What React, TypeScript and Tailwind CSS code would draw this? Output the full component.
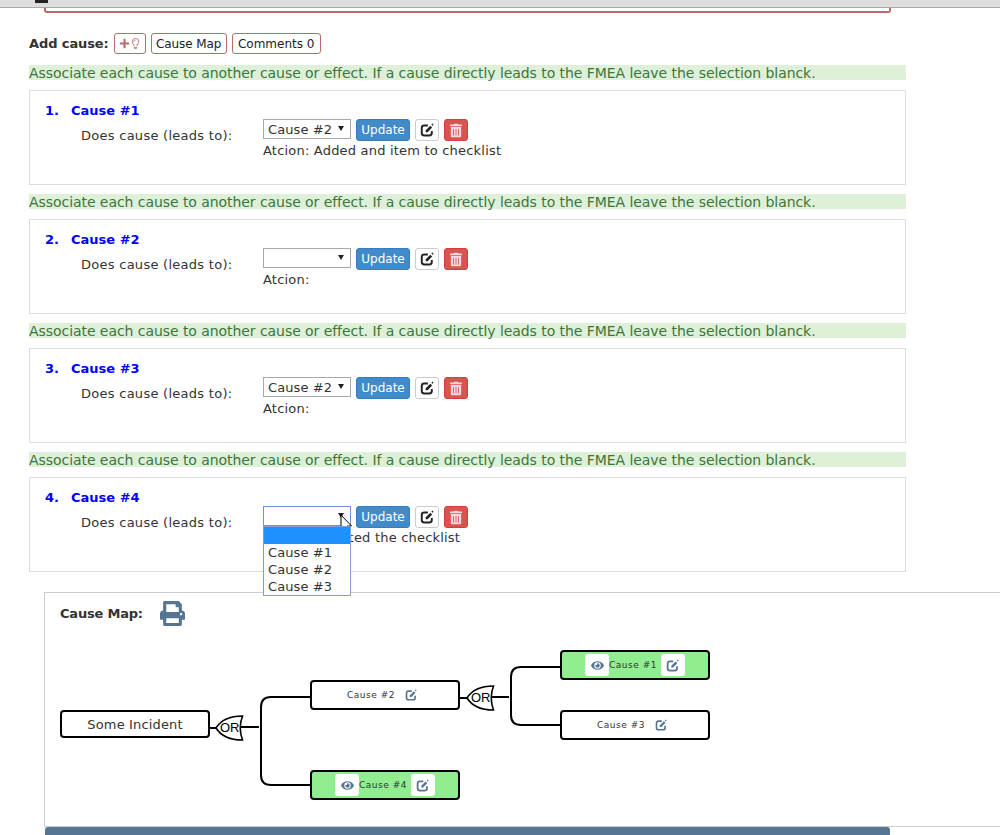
import React from "react";
import { FaPlus, FaRegLightbulb, FaPrint, FaEye, FaTrashAlt } from "react-icons/fa";

const HINT = "Associate each cause to another cause or effect. If a cause directly leads to the FMEA leave the selection blanck.";

function EditIcon({ className, color }: { className?: string; color: string }) {
  return (
    <svg viewBox="0 0 16 16" className={className} fill="none" stroke={color}>
      <path d="M13.5 9v2.5a2.8 2.8 0 0 1-2.8 2.8H4.8A2.8 2.8 0 0 1 2 11.5V5.6a2.8 2.8 0 0 1 2.8-2.8H9" strokeWidth="2.2" />
      <path d="M6.5 10.5V8.2L11.8 3l2.1 2.1L8.7 10.5z" fill={color} stroke="none" />
      <path d="M13 1.8l1.2-1.1 1.3 1.3-1.1 1.2z" fill={color} stroke="none" />
    </svg>
  );
}

function CauseSelect({ value, focus }: { value: string; focus?: boolean }) {
  return (
    <div className="relative w-[88px] h-[20px]">
      <select
        value={value}
        onChange={() => {}}
        className={`appearance-none block w-[88px] h-[20px] bg-white pl-1 pt-[2px] text-[13px] leading-[16px] tracking-[0.1px] text-[#333] border rounded-none ${focus ? "border-[#6d95d8]" : "border-[#a9a9a9]"}`}
      >
        <option value=""></option>
        <option value="Cause #1">Cause #1</option>
        <option value="Cause #2">Cause #2</option>
        <option value="Cause #3">Cause #3</option>
      </select>
      <svg viewBox="0 0 6 5" className="absolute right-[7px] top-[7px] w-[6px] h-[5px]">
        <path d="M0 0h6L3 5z" fill="#222" />
      </svg>
    </div>
  );
}

function CauseCard({ n, select, action, dropdown }: { n: number; select: string; action: string; dropdown?: boolean }) {
  return (
    <div className="relative h-[95px] border border-[#ddd] bg-white flex flex-col pl-[15px] pt-[11px]">
      <div className="flex h-[17px] items-center text-[13px] font-bold text-[#0000ff]">
        <span className="w-[26px]">{n}.</span>
        <span>Cause #{n}</span>
      </div>
      <div className="flex">
        <div className="w-[218px] pl-[36px] pt-[8px] text-[13px] leading-[18px] tracking-[0.27px] text-[#333]">Does cause (leads to):</div>
        <div className="flex flex-col">
          <div className="flex items-start gap-[5px] h-[22px]">
            <CauseSelect value={select} focus={dropdown} />
            <button className="h-[22px] w-[54px] rounded-[3px] bg-[#428bca] border border-[#357ebd] text-white text-[12px] font-normal">Update</button>
            <button className="h-[22px] w-[24px] rounded-[3px] bg-white border border-[#ccc] flex items-center justify-center">
              <EditIcon className="w-[14px] h-[14px]" color="#222" />
            </button>
            <button className="h-[22px] w-[24px] rounded-[3px] bg-[#d9534f] border border-[#d43f3a] flex items-center justify-center">
              <FaTrashAlt className="w-[12px] h-[15px] text-[#f8d7e4]" />
            </button>
          </div>
          <div className="mt-[1px] text-[13px] leading-[18px] tracking-[0.2px] text-[#333]">{action}</div>
        </div>
      </div>
      {dropdown && (
        <div className="absolute left-[233px] top-[48px] w-[88px] h-[70px] bg-white border border-[#7f9fd6] text-[13px] leading-[17px] tracking-[0.1px] text-[#333] z-10">
          <div className="h-[17px] bg-[#1e90ff]" />
          <div className="pl-1">Cause #1</div>
          <div className="pl-1">Cause #2</div>
          <div className="pl-1">Cause #3</div>
        </div>
      )}
    </div>
  );
}

function Section(props: { n: number; select: string; action: string; dropdown?: boolean }) {
  return (
    <div className="flex flex-col gap-[10px]">
      <div className="h-[15px] bg-[#dff0d8] text-[#3c763d] text-[14px] leading-[17px] tracking-[-0.06px] whitespace-nowrap">{HINT}</div>
      <CauseCard {...props} />
    </div>
  );
}

function MapBtn({ children }: { children: React.ReactNode }) {
  return <span className="w-[24px] h-[22px] bg-white rounded-[3px] flex items-center justify-center">{children}</span>;
}

function Node({ x, y, label, green, w = 150, h = 30, big, edit = true, eye }: { x: number; y: number; label: string; green?: boolean; w?: number; h?: number; big?: boolean; edit?: boolean; eye?: boolean }) {
  const plain = !green && !big;
  return (
    <div
      className={`absolute flex items-center justify-center border-2 border-black rounded-[4px] text-[#333] ${green ? "bg-[#90ee90]" : "bg-white"} ${plain ? "pr-[6px]" : ""}`}
      style={{ left: x, top: y, width: w, height: h }}
    >
      {eye && <MapBtn><FaEye className="w-[13px] h-[13px] text-[#567592]" /></MapBtn>}
      <span className={big ? "text-[13px] tracking-[0.15px] mt-[1px]" : "text-[9px] tracking-[0.5px] mt-[1px]"}>{label}</span>
      {edit && (green ? (
        <span className="ml-[4px]"><MapBtn><EditIcon className="w-[13px] h-[13px]" color="#567592" /></MapBtn></span>
      ) : (
        <EditIcon className="ml-[10px] w-[12px] h-[12px]" color="#567592" />
      ))}
    </div>
  );
}

function OrGate({ x, y }: { x: number; y: number }) {
  return (
    <div className="absolute w-[29px] h-[26px]" style={{ left: x, top: y }}>
      <svg viewBox="0 0 29 26" className="absolute inset-0 w-[29px] h-[26px]">
        <path d="M1 13C6 5 14 1 27.5 1Q23 13 27.5 25C14 25 6 21 1 13Z" fill="#fff" stroke="#000" strokeWidth="1.6" />
      </svg>
      <span className="absolute left-[5px] top-[4px] text-[13px] leading-[18px] text-black" style={{ fontFamily: '"Liberation Sans", sans-serif' }}>OR</span>
    </div>
  );
}

export default function App() {
  return (
    <div className="relative w-[1000px] h-[835px] overflow-hidden bg-white" style={{ fontFamily: '"DejaVu Sans", sans-serif' }}>
      <div className="relative h-[8px] bg-[#dddddd] border-b border-[#aaaaaa]">
        <div className="absolute left-[35px] top-0 w-[13px] h-[3px] bg-[#222]" />
      </div>
      <div className="ml-[44px] w-[847px] h-[5px] border-2 border-t-0 border-[#b96a6a] rounded-b-[3px]" />

      <div className="ml-[29px] w-[877px] flex items-center h-[21px] mt-[20px]">
        <span className="text-[13px] font-bold tracking-[-0.1px] text-[#333] mr-[5px]">Add cause:</span>
        <span className="h-[21px] w-[32px] border border-[#b96a6a] rounded-[3px] flex items-center justify-center gap-[1px]">
          <FaPlus className="w-[11px] h-[11px] text-[#b96a6a]" />
          <FaRegLightbulb className="w-[9px] h-[11px] text-[#c08a8a]" />
        </span>
        <span className="ml-[5px] h-[21px] w-[76px] border border-[#b96a6a] rounded-[3px] flex items-center justify-center text-[12px] tracking-[-0.1px] text-[#222]">Cause Map</span>
        <span className="ml-[5px] h-[21px] w-[89px] border border-[#b96a6a] rounded-[3px] flex items-center justify-center text-[12px] text-[#222]">Comments 0</span>
      </div>

      <div className="ml-[29px] w-[877px] mt-[11px] flex flex-col gap-[9px]">
        <Section n={1} select="Cause #2" action="Atcion: Added and item to checklist" />
        <Section n={2} select="" action="Atcion:" />
        <Section n={3} select="Cause #2" action="Atcion:" />
        <Section n={4} select="" action="Atcion: Updated the checklist" dropdown />
      </div>

      <div className="relative ml-[44px] mt-[20px] w-[980px] h-[235px] border border-[#cccccc] bg-white">
        <div className="absolute left-[15px] top-[8px] flex items-center gap-[16px]">
          <span className="text-[13px] font-bold tracking-[-0.2px] text-[#333]">Cause Map:</span>
          <FaPrint className="w-[27px] h-[25px] text-[#567592]" />
        </div>
        <svg className="absolute left-0 top-0 w-[700px] h-[233px]" fill="none" stroke="#000" strokeWidth="2">
          <path d="M164 135H172" />
          <path d="M195 134H214" />
          <path d="M265 104H226Q216 104 216 114V182Q216 192 226 192H265" />
          <path d="M414 105H422" />
          <path d="M445 104H464" />
          <path d="M515 74H476Q466 74 466 84V122Q466 132 476 132H515" />
        </svg>
        <Node x={15} y={117} w={150} h={28} big label="Some Incident" edit={false} />
        <OrGate x={170} y={122} />
        <Node x={265} y={87} label="Cause #2" />
        <Node x={265} y={177} label="Cause #4" green eye />
        <OrGate x={421} y={92} />
        <Node x={515} y={57} label="Cause #1" green eye />
        <Node x={515} y={117} label="Cause #3" />
      </div>

      <div className="ml-[45px] w-[845px] h-[10px] bg-[#567592] rounded-t-[3px]" />

      <svg viewBox="0 0 13 20" className="absolute left-[340px] top-[514px] w-[13px] h-[20px]">
        <path d="M1 1V16L4.5 12.8L7 18.5L9.5 17.5L7 12H11.5Z" fill="#fff" stroke="#000" strokeWidth="1" />
      </svg>
    </div>
  );
}
